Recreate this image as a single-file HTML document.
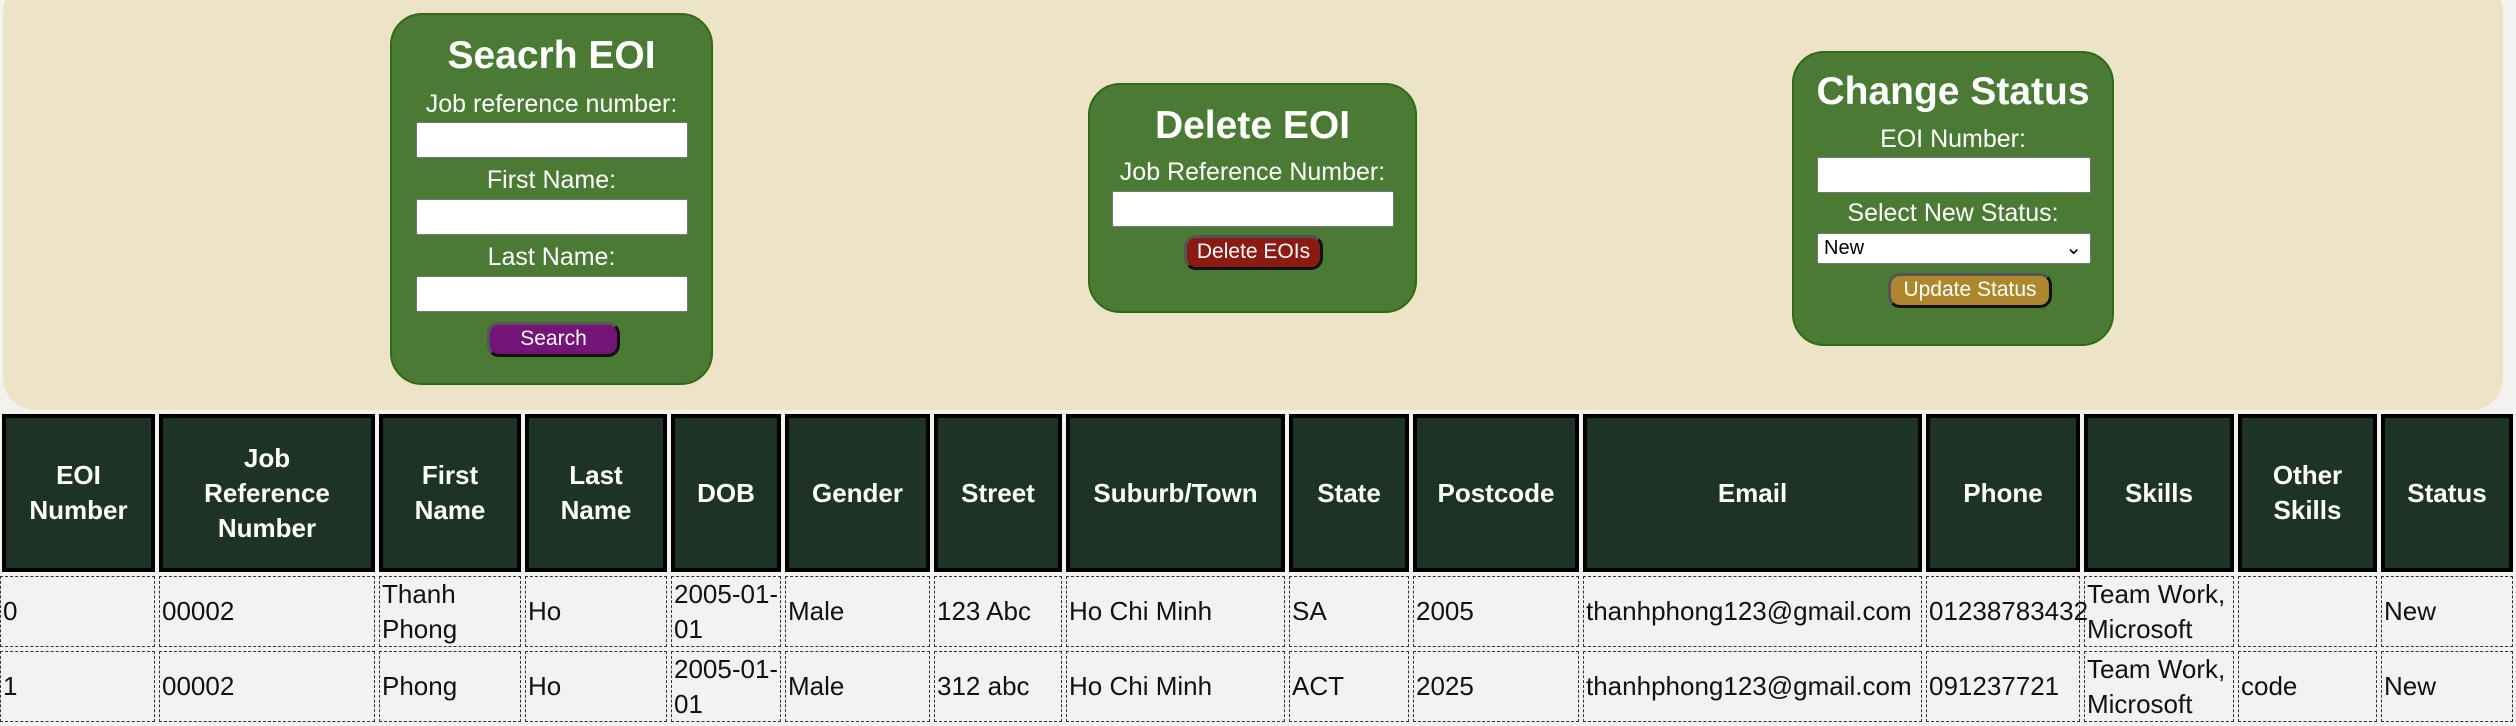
<!DOCTYPE html>
<html><head><meta charset="utf-8"><style>
*{box-sizing:border-box;margin:0;padding:0}
body{width:2516px;height:726px;background:#f2f2f1;font-family:"Liberation Sans",sans-serif;position:relative;overflow:hidden}
.panel{position:absolute;left:3px;top:-20px;width:2500px;height:430px;background:#ede3c6;border-radius:32px}
.box{position:absolute;background:#4a7a33;border:2px solid #2f6a14;border-radius:32px;color:#fff;text-align:center}
.t{position:absolute;left:0;right:0;font-weight:bold;font-size:39px;line-height:42px}
.l{position:absolute;left:0;right:0;font-size:25px;line-height:28px;white-space:nowrap}
.in{position:absolute;background:#fff;border:1px solid #777;border-radius:2px}
.btn{position:absolute;border:3px solid #111;border-top-color:#555;border-left-color:#555;border-radius:12px;color:#fff;font-size:21px;text-align:center}
.c{position:absolute;display:flex;align-items:center;font-size:26px;line-height:35px;color:#111;white-space:nowrap}
.h{background:#1c3325;border:4px solid #000;color:#fff;font-weight:bold;justify-content:center;text-align:center;font-size:26px}
.d{border:1px dashed #333;padding-left:2px}
</style></head><body>
<div class="panel"></div>
<div class="box" style="left:390px;top:13px;width:323px;height:372px">
<div class="t" style="top:20px">Seacrh EOI</div>
<div class="l" style="top:75px">Job reference number:</div>
<div class="in" style="left:24px;top:107px;width:272px;height:36px"></div>
<div class="l" style="top:151px">First Name:</div>
<div class="in" style="left:24px;top:184px;width:272px;height:36px"></div>
<div class="l" style="top:228px">Last Name:</div>
<div class="in" style="left:24px;top:261px;width:272px;height:36px"></div>
<div class="btn" style="left:95px;top:307px;width:133px;height:35px;background:#731476;line-height:28px">Search</div>
</div>
<div class="box" style="left:1088px;top:83px;width:329px;height:230px">
<div class="t" style="top:20px">Delete EOI</div>
<div class="l" style="top:73px">Job Reference Number:</div>
<div class="in" style="left:22px;top:106px;width:282px;height:36px"></div>
<div class="btn" style="left:94px;top:150px;width:139px;height:35px;background:#8b1a12;line-height:28px">Delete EOIs</div>
</div>
<div class="box" style="left:1792px;top:51px;width:322px;height:295px">
<div class="t" style="top:18px">Change Status</div>
<div class="l" style="top:72px">EOI Number:</div>
<div class="in" style="left:23px;top:104px;width:274px;height:36px"></div>
<div class="l" style="top:146px">Select New Status:</div>
<div class="in" style="left:23px;top:180px;width:274px;height:31px;color:#000;text-align:left;font-size:20px;line-height:29px;padding-left:6px">New<span style="position:absolute;right:8px;top:0">&#8964;</span></div>
<div class="btn" style="left:94px;top:220px;width:164px;height:35px;background:#ae862e;line-height:28px">Update Status</div>
</div>
<div class="c h" style="left:2px;top:414px;width:153px;height:158px">EOI<br>Number</div>
<div class="c h" style="left:159px;top:414px;width:216px;height:158px">Job<br>Reference<br>Number</div>
<div class="c h" style="left:379px;top:414px;width:142px;height:158px">First<br>Name</div>
<div class="c h" style="left:525px;top:414px;width:142px;height:158px">Last<br>Name</div>
<div class="c h" style="left:671px;top:414px;width:110px;height:158px">DOB</div>
<div class="c h" style="left:785px;top:414px;width:145px;height:158px">Gender</div>
<div class="c h" style="left:934px;top:414px;width:128px;height:158px">Street</div>
<div class="c h" style="left:1066px;top:414px;width:219px;height:158px">Suburb/Town</div>
<div class="c h" style="left:1289px;top:414px;width:120px;height:158px">State</div>
<div class="c h" style="left:1413px;top:414px;width:166px;height:158px">Postcode</div>
<div class="c h" style="left:1583px;top:414px;width:339px;height:158px">Email</div>
<div class="c h" style="left:1926px;top:414px;width:154px;height:158px">Phone</div>
<div class="c h" style="left:2084px;top:414px;width:150px;height:158px">Skills</div>
<div class="c h" style="left:2238px;top:414px;width:139px;height:158px">Other<br>Skills</div>
<div class="c h" style="left:2381px;top:414px;width:132px;height:158px">Status</div>

<div class="c d" style="left:0px;top:576px;width:155px;height:71px">0</div>
<div class="c d" style="left:159px;top:576px;width:216px;height:71px">00002</div>
<div class="c d" style="left:379px;top:576px;width:142px;height:71px">Thanh<br>Phong</div>
<div class="c d" style="left:525px;top:576px;width:142px;height:71px">Ho</div>
<div class="c d" style="left:671px;top:576px;width:110px;height:71px">2005-01-<br>01</div>
<div class="c d" style="left:785px;top:576px;width:145px;height:71px">Male</div>
<div class="c d" style="left:934px;top:576px;width:128px;height:71px">123 Abc</div>
<div class="c d" style="left:1066px;top:576px;width:219px;height:71px">Ho Chi Minh</div>
<div class="c d" style="left:1289px;top:576px;width:120px;height:71px">SA</div>
<div class="c d" style="left:1413px;top:576px;width:166px;height:71px">2005</div>
<div class="c d" style="left:1583px;top:576px;width:339px;height:71px">thanhphong123@gmail.com</div>
<div class="c d" style="left:1926px;top:576px;width:154px;height:71px">01238783432</div>
<div class="c d" style="left:2084px;top:576px;width:150px;height:71px">Team Work,<br>Microsoft</div>
<div class="c d" style="left:2238px;top:576px;width:139px;height:71px"></div>
<div class="c d" style="left:2381px;top:576px;width:132px;height:71px">New</div>

<div class="c d" style="left:0px;top:651px;width:155px;height:71px">1</div>
<div class="c d" style="left:159px;top:651px;width:216px;height:71px">00002</div>
<div class="c d" style="left:379px;top:651px;width:142px;height:71px">Phong</div>
<div class="c d" style="left:525px;top:651px;width:142px;height:71px">Ho</div>
<div class="c d" style="left:671px;top:651px;width:110px;height:71px">2005-01-<br>01</div>
<div class="c d" style="left:785px;top:651px;width:145px;height:71px">Male</div>
<div class="c d" style="left:934px;top:651px;width:128px;height:71px">312 abc</div>
<div class="c d" style="left:1066px;top:651px;width:219px;height:71px">Ho Chi Minh</div>
<div class="c d" style="left:1289px;top:651px;width:120px;height:71px">ACT</div>
<div class="c d" style="left:1413px;top:651px;width:166px;height:71px">2025</div>
<div class="c d" style="left:1583px;top:651px;width:339px;height:71px">thanhphong123@gmail.com</div>
<div class="c d" style="left:1926px;top:651px;width:154px;height:71px">091237721</div>
<div class="c d" style="left:2084px;top:651px;width:150px;height:71px">Team Work,<br>Microsoft</div>
<div class="c d" style="left:2238px;top:651px;width:139px;height:71px">code</div>
<div class="c d" style="left:2381px;top:651px;width:132px;height:71px">New</div>
</body></html>
